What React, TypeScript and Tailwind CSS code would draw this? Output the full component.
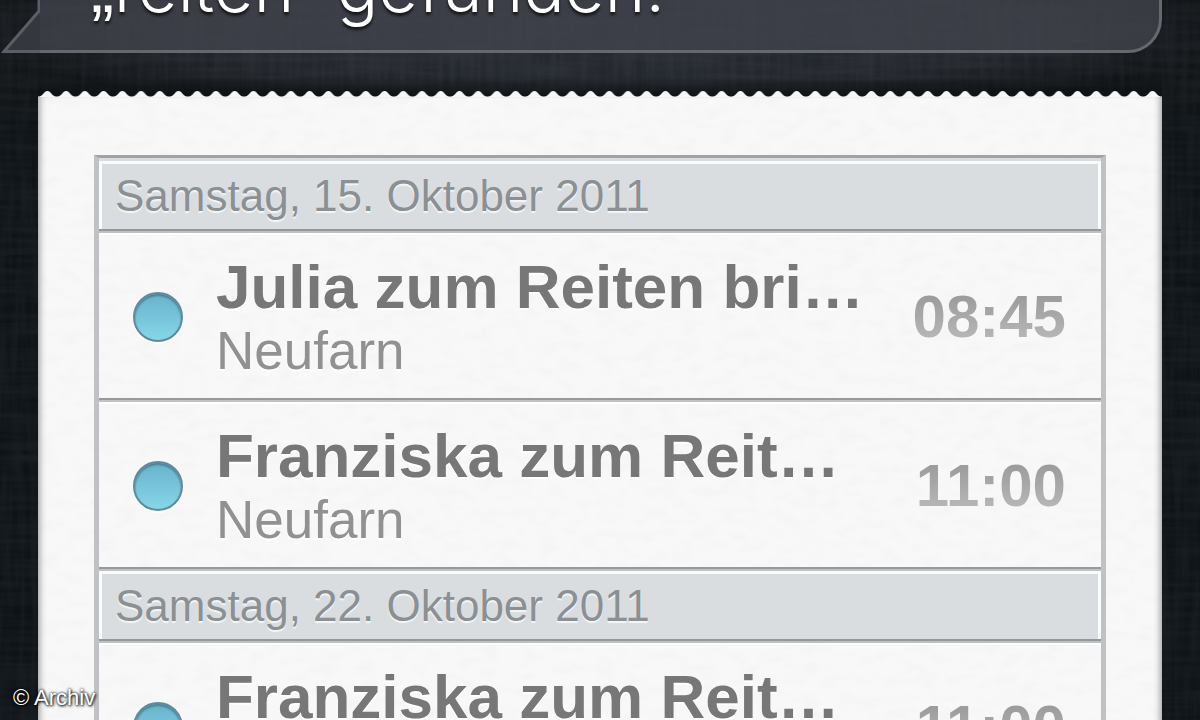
type Appointment = {
  title: string;
  place: string;
  time: string;
};

type Day = {
  date: string;
  appointments: Appointment[];
};

const days: Day[] = [
  {
    date: "Samstag, 15. Oktober 2011",
    appointments: [
      { title: "Julia zum Reiten bri…", place: "Neufarn", time: "08:45" },
      { title: "Franziska zum Reit…", place: "Neufarn", time: "11:00" },
    ],
  },
  {
    date: "Samstag, 22. Oktober 2011",
    appointments: [{ title: "Franziska zum Reit…", place: "Neufarn", time: "11:00" }],
  },
];

/* Fine woven noise for the dark background */
function Linen() {
  return (
    <svg className="absolute inset-0 w-full h-full opacity-7" aria-hidden="true">
      <filter id="weft">
        <feTurbulence type="fractalNoise" baseFrequency="0.012 0.16" numOctaves="2" seed="3" />
        <feColorMatrix values="0 0 0 0 0.5  0 0 0 0 0.53  0 0 0 0 0.56  1.6 0 0 0 -0.55" />
      </filter>
      <filter id="warp">
        <feTurbulence type="fractalNoise" baseFrequency="0.16 0.012" numOctaves="2" seed="8" />
        <feColorMatrix values="0 0 0 0 0.5  0 0 0 0 0.53  0 0 0 0 0.56  1.6 0 0 0 -0.55" />
      </filter>
      <rect width="100%" height="100%" filter="url(#weft)" />
      <rect width="100%" height="100%" filter="url(#warp)" />
    </svg>
  );
}

function PaperGrain() {
  return (
    <svg className="absolute inset-0 w-full h-full" aria-hidden="true">
      <filter id="grain">
        <feTurbulence type="fractalNoise" baseFrequency="0.05 0.09" numOctaves="2" seed="5" />
        <feColorMatrix values="0 0 0 0 0.5  0 0 0 0 0.5  0 0 0 0 0.5  0.14 0 0 0 -0.06" />
      </filter>
      <rect width="100%" height="100%" filter="url(#grain)" />
    </svg>
  );
}

function TornEdge() {
  return (
    <svg className="block w-full h-[6px]" aria-hidden="true">
      <pattern id="teeth" width="18.73" height="6" patternUnits="userSpaceOnUse">
        <path d="M0 5.4 H1 C3.6 5.2 4.8 3.4 6.6 1.2 Q9.4 -1 12.2 1.2 C14 3.4 15.2 5.2 17.7 5.4 H18.73 V6 H0 Z" fill="#f7f7f7" />
      </pattern>
      <rect width="100%" height="6" fill="url(#teeth)" />
    </svg>
  );
}

function SpeechBubble() {
  return (
    <header className="relative h-[53px] ml-[40px] mr-[38px] pl-[51px] pb-[25px] flex items-end bg-[#43464d]/75 border-r-3 border-b-3 border-[#65686e] rounded-br-[34px]">
      {/* tail */}
      <svg className="absolute bottom-[-3px] right-full w-[40px] h-[53px]" viewBox="0 0 40 53" aria-hidden="true">
        <path d="M40 0 V53 H3 L40 11 Z" fill="#34373d" />
        <path d="M39 0 V11 L4 51.5 H40" fill="none" stroke="#5b5e64" strokeWidth="3" />
      </svg>
      <h1 className="relative font-['Inter'] font-light text-[69px] leading-[72px] text-white whitespace-nowrap [text-shadow:0_3px_3px_#000000aa]">
        <span className="font-['Liberation_Sans']">„</span>reiten
        <span className="font-['Liberation_Sans']">“</span> gefunden.
      </h1>
    </header>
  );
}

function AppointmentRow({ title, place, time }: Appointment) {
  return (
    <li className="h-[169px] flex items-center pl-[34px] pr-[35px] border-b-2 border-[#c0c2c4] shadow-[inset_0_2px_0_#ffffff,inset_0_-2px_0_#98999b]">
      <span className="size-[50px] shrink-0 rounded-full bg-gradient-to-b from-[#69b3cb] to-[#86d6e9] border-2 border-[#5e8b9b] shadow-[inset_0_2px_2px_#4a7f93,0_2px_1px_#ffffff]" />
      <div className="flex-1 min-w-0 ml-[33px] whitespace-nowrap [text-shadow:0_2px_1px_#ffffff]">
        <h3 className="text-[62px] leading-[68px] font-bold text-[#777777]">{title}</h3>
        <p className="text-[53px] leading-[60px] text-[#919191]">{place}</p>
      </div>
      <time className="text-[60px] leading-[68px] font-bold text-transparent bg-clip-text bg-gradient-to-b from-[#9c9c9c] from-20% to-[#b6b6b6] to-80%">
        {time}
      </time>
    </li>
  );
}

function DaySection({ date, appointments }: Day) {
  return (
    <section>
      <h2 className="h-[72px] border-b-2 border-[#bcc1c4] shadow-[inset_0_-2px_0_#949899]">
        <span className="flex items-center h-[68px] pl-[13px] pb-[1px] border-x-3 border-t-3 border-[#fafcfc] bg-[#d9dde0] text-[44px] font-normal text-[#8b9093] whitespace-nowrap [text-shadow:0_2px_1px_#f4f6f7]">
          {date}
        </span>
      </h2>
      <ul>
        {appointments.map((appointment, i) => (
          <AppointmentRow key={i} {...appointment} />
        ))}
      </ul>
    </section>
  );
}

export default function App() {
  return (
    <div className="relative h-screen overflow-hidden flex flex-col bg-[#0e1317] font-['Liberation_Sans',sans-serif]">
      <div className="absolute inset-x-0 top-0 h-[110px] bg-[radial-gradient(ellipse_at_50%_30%,#272a33_0%,#22262c_50%,#101417_75%)]" />
      <Linen />
      <SpeechBubble />

      <main className="relative flex-1 flex flex-col mx-[38px] mt-[38px]">
        <div className="absolute inset-x-0 -top-[14px] h-[22px] bg-gradient-to-b from-transparent to-[#0d1113]" />
        <div className="relative">
          <TornEdge />
        </div>
        <div className="relative flex-1 px-[56px] pt-[58px] bg-[#f8f8f8] shadow-[inset_7px_0_6px_-5px_#a0a0a0,inset_-7px_0_6px_-5px_#a0a0a0]">
          <PaperGrain />
          <div className="relative border-x-5 border-t-3 border-x-[#bfc1c4] border-t-[#a0a2a3]">
            <div className="border-t-3 border-[#d9dcde]">
              {days.map((day) => (
                <DaySection key={day.date} {...day} />
              ))}
            </div>
          </div>
        </div>
      </main>

      <small className="absolute left-[13px] bottom-[9px] text-[22px] leading-[26px] text-white [text-shadow:0_0_3px_#000000,1px_1px_3px_#000000]">
        © Archiv
      </small>
    </div>
  );
}
